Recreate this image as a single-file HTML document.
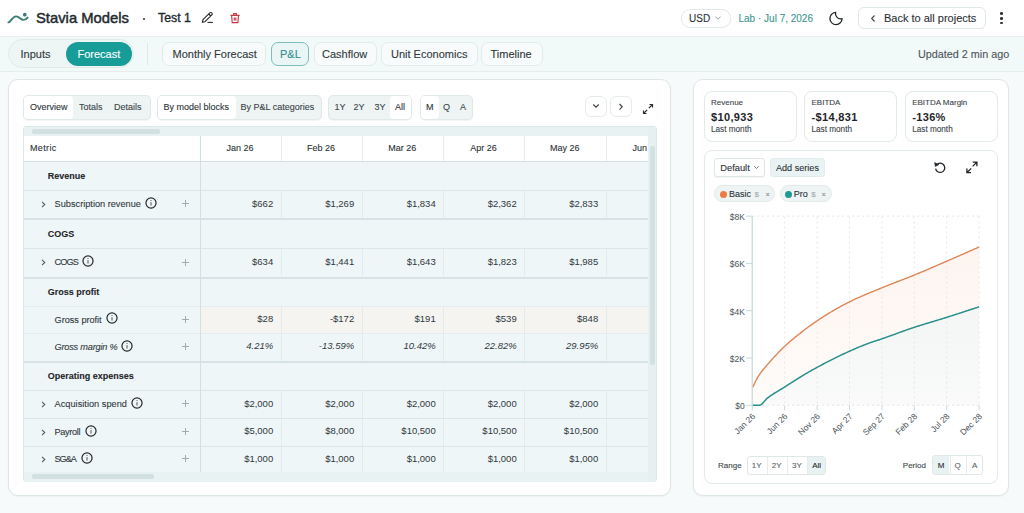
<!DOCTYPE html>
<html><head><meta charset="utf-8">
<style>
*{box-sizing:border-box;margin:0;padding:0}
html,body{width:1024px;height:513px;overflow:hidden}
body{position:relative;background:#f6fafa;font-family:"Liberation Sans",sans-serif;color:#2a3236}
.t{-webkit-text-stroke:0.1px currentColor}
.v{-webkit-text-stroke:0}
.a{position:absolute}
.t{position:absolute;white-space:nowrap;line-height:1}
#hdr{left:0;top:0;width:1024px;height:37px;background:#fff;border-bottom:1px solid #e8efef}
#nav{left:0;top:37px;width:1024px;height:35px;background:#f1f9f9;border-bottom:1px solid #e5eded}
.btn{position:absolute;background:#fff;border:1px solid #dfe7e7;border-radius:6px}
.card{position:absolute;background:#fff;border:1px solid #dfe6e6;border-radius:10px;box-shadow:0 1px 2px rgba(0,0,0,.04)}
.seg{position:absolute;background:#eef4f4;border:1px solid #e0e8e8;border-radius:5px;box-shadow:0 1px 1px rgba(0,0,0,.05)}
.sel{position:absolute;background:#fff;border-radius:4px}
.s9{font-size:9px}
.inf{position:absolute;width:10.6px;height:10.6px;border:1.1px solid #262d31;border-radius:50%}
.inf:before{content:"";position:absolute;left:3.65px;top:1.6px;width:1.2px;height:1.2px;background:#262d31}
.inf:after{content:"";position:absolute;left:3.65px;top:3.8px;width:1.2px;height:3.6px;background:#262d31}
</style></head><body>

<!-- ===== HEADER ===== -->
<div id="hdr" class="a"></div>
<svg class="a" style="left:0;top:0" width="34" height="34" viewBox="0 0 34 34">
  <path d="M8.4 22.4 C10.8 22.4 12.2 16.5 16 16.4 C19.6 16.3 20.4 19.9 23.4 19.9 C25.4 19.9 26.8 18.7 27.6 17.6" fill="none" stroke="#3b7d75" stroke-width="1.9" stroke-linecap="round"/>
  <circle cx="24.8" cy="14.7" r="1.85" fill="#3b7d75"/>
</svg>
<div class="t" style="left:36px;top:11px;font-size:14.8px;-webkit-text-stroke:0.45px #22292d;color:#22292d">Stavia Models</div>
<div class="a" style="left:142.5px;top:17.5px;width:2.6px;height:2.6px;border-radius:50%;background:#333"></div>
<div class="t" style="left:158px;top:12.4px;font-size:12.3px;-webkit-text-stroke:0.35px #22292d;color:#22292d">Test 1</div>
<svg class="a" style="left:0;top:0" width="250" height="34" viewBox="0 0 250 34">
  <path d="M202.4 22.3 L203 19.6 L209.8 12.9 C210.4 12.3 211.2 12.3 211.8 12.9 C212.4 13.5 212.4 14.3 211.8 14.9 L205 21.7 Z M208.7 14 L210.7 16" fill="none" stroke="#25292c" stroke-width="1.15" stroke-linejoin="round"/>
  <path d="M207.5 22.4 H212.8" stroke="#25292c" stroke-width="1.1"/>
  <path d="M230.4 15.3 H239.7 M233.7 15.3 V13.6 H236.4 V15.3 M231.6 15.3 L232.2 22.6 H237.9 L238.5 15.3 M234.3 17.6 V20.5 M235.8 17.6 V20.5" fill="none" stroke="#c23a44" stroke-width="1.15" stroke-linejoin="round"/>
</svg>
<div class="a" style="left:681px;top:9px;width:50px;height:19px;border:1px solid #e1e8e8;border-radius:9px;background:#fff"></div>
<div class="t" style="left:689px;top:13.5px;font-size:10px;color:#2a3236">USD</div>
<svg class="a" style="left:714px;top:15px" width="8" height="6" viewBox="0 0 8 6"><path d="M1.5 1.8 L4 4.2 L6.5 1.8" fill="none" stroke="#8a9599" stroke-width="0.9"/></svg>
<div class="t" style="left:738.5px;top:13.5px;font-size:10px;color:#3d9690">Lab · Jul 7, 2026</div>
<svg class="a" style="left:0;top:0" width="860" height="34" viewBox="0 0 860 34">
  <path d="M835.6 12.4 A6.1 6.1 0 1 0 842.1 18.6 A5.2 5.2 0 0 1 835.6 12.4 Z" fill="none" stroke="#1f2427" stroke-width="1.3" stroke-linejoin="round"/>
</svg>
<div class="btn" style="left:858px;top:7px;width:128px;height:22px;border-radius:6px"></div>
<svg class="a" style="left:869px;top:14px" width="8" height="9" viewBox="0 0 8 9"><path d="M5.5 1.5 L2.7 4.5 L5.5 7.5" fill="none" stroke="#444" stroke-width="1.1"/></svg>
<div class="t" style="left:884px;top:13px;font-size:11px;color:#2a3236">Back to all projects</div>
<div class="a" style="left:1000px;top:12.4px;width:2.6px;height:2.6px;border-radius:50%;background:#333"></div>
<div class="a" style="left:1000px;top:17.1px;width:2.6px;height:2.6px;border-radius:50%;background:#333"></div>
<div class="a" style="left:1000px;top:21.8px;width:2.6px;height:2.6px;border-radius:50%;background:#333"></div>

<!-- ===== NAV ===== -->
<div id="nav" class="a"></div>
<div class="a" style="left:8px;top:39px;width:126px;height:29px;border-radius:15px;background:#eef5f5;border:1px solid #e2eaea"></div>
<div class="t" style="left:20.5px;top:48.5px;font-size:11px;color:#2f383c">Inputs</div>
<div class="a" style="left:66px;top:41.5px;width:65.5px;height:24.5px;border-radius:13px;background:#179c98"></div>
<div class="t" style="left:77.5px;top:48.5px;font-size:11px;color:#fff">Forecast</div>
<div class="a" style="left:146.5px;top:43px;width:1px;height:22px;background:#e0e8e8"></div>
<div class="btn" style="left:162px;top:41.8px;width:104px;height:24.5px;border-radius:7px;border-color:#e3eaea;background:#f7fbfb"></div>
<div class="t" style="left:172.5px;top:48.5px;font-size:11px;color:#2f383c">Monthly Forecast</div>
<div class="btn" style="left:271px;top:41.8px;width:38px;height:24.5px;border-radius:7px;border-color:#7fbcba;background:#eaf5f5"></div>
<div class="t" style="left:280px;top:48.5px;font-size:11px;color:#2f8f8a">P&amp;L</div>
<div class="btn" style="left:314px;top:41.8px;width:63px;height:24.5px;border-radius:7px;border-color:#e3eaea;background:#f7fbfb"></div>
<div class="t" style="left:322px;top:48.5px;font-size:11px;color:#2f383c">Cashflow</div>
<div class="btn" style="left:381px;top:41.8px;width:97px;height:24.5px;border-radius:7px;border-color:#e3eaea;background:#f7fbfb"></div>
<div class="t" style="left:391px;top:48.5px;font-size:11px;color:#2f383c">Unit Economics</div>
<div class="btn" style="left:481px;top:41.8px;width:61.5px;height:24.5px;border-radius:7px;border-color:#e3eaea;background:#f7fbfb"></div>
<div class="t" style="left:490.5px;top:48.5px;font-size:11px;color:#2f383c">Timeline</div>
<div class="t" style="left:918px;top:48.5px;font-size:10.8px;color:#4a5458">Updated 2 min ago</div>

<!-- ===== LEFT CARD ===== -->
<div class="card" style="left:8px;top:79px;width:663px;height:417px"></div>

<!-- toolbar -->
<div class="seg" style="left:22.5px;top:94.5px;width:128px;height:25px"></div>
<div class="sel" style="left:23.5px;top:95.5px;width:49px;height:23px"></div>
<div class="t s9" style="left:30px;top:102.7px;color:#2a3236">Overview</div>
<div class="t s9" style="left:79px;top:102.7px;color:#3a4448">Totals</div>
<div class="t s9" style="left:114px;top:102.7px;color:#3a4448">Details</div>

<div class="seg" style="left:157px;top:94.5px;width:164.5px;height:25px"></div>
<div class="sel" style="left:158px;top:95.5px;width:78px;height:23px"></div>
<div class="t s9" style="left:163.5px;top:102.7px;color:#2a3236">By model blocks</div>
<div class="t s9" style="left:240.5px;top:102.7px;color:#3a4448">By P&amp;L categories</div>

<div class="seg" style="left:327.5px;top:94.5px;width:84px;height:25px"></div>
<div class="sel" style="left:390px;top:95.5px;width:20.5px;height:23px"></div>
<div class="t s9" style="left:334.5px;top:102.7px;color:#3a4448">1Y</div>
<div class="t s9" style="left:353.5px;top:102.7px;color:#3a4448">2Y</div>
<div class="t s9" style="left:374.5px;top:102.7px;color:#3a4448">3Y</div>
<div class="t s9" style="left:395px;top:102.7px;color:#2a3236">All</div>

<div class="seg" style="left:420px;top:94.5px;width:53px;height:25px"></div>
<div class="sel" style="left:421px;top:95.5px;width:18px;height:23px"></div>
<div class="t s9" style="left:426px;top:102.7px;color:#2a3236">M</div>
<div class="t s9" style="left:443px;top:102.7px;color:#3a4448">Q</div>
<div class="t s9" style="left:460px;top:102.7px;color:#3a4448">A</div>

<div class="btn" style="left:585px;top:96px;width:21.5px;height:21px;border-color:#e6ecec"></div>
<svg class="a" style="left:591px;top:102px" width="10" height="8" viewBox="0 0 10 8"><path d="M2.3 2.5 L5 5.2 L7.7 2.5" fill="none" stroke="#444" stroke-width="1.2"/></svg>
<div class="btn" style="left:610px;top:96px;width:21.5px;height:21px;border-color:#e6ecec"></div>
<svg class="a" style="left:617px;top:102px" width="8" height="10" viewBox="0 0 8 10"><path d="M2.5 2 L5.2 4.8 L2.5 7.6" fill="none" stroke="#444" stroke-width="1.2"/></svg>
<svg class="a" style="left:641px;top:102px" width="14" height="14" viewBox="0 0 14 14">
  <path d="M8.5 2.5 H11.5 V5.5 M11.5 2.5 L7.8 6.2 M2.5 8.5 V11.5 H5.5 M2.5 11.5 L6.2 7.8" fill="none" stroke="#2a2f33" stroke-width="1.2"/>
</svg>

<!-- table -->
<div id="tbl" class="a" style="left:22.5px;top:125.5px;width:634px;height:356px;background:#eff6f7;border:1px solid #dde8ea;border-radius:3px"></div>
<div class="a" style="left:23.5px;top:135.5px;width:624.5px;height:25px;background:#fff"></div>
<div class="a" style="left:23.5px;top:160.5px;width:624.5px;height:1.5px;background:#d3e1e3"></div>
<div class="t" style="left:30px;top:135.5px;height:25px;line-height:25px;font-size:9px;letter-spacing:0.35px;color:#2a3236">Metric</div>
<div class="t" style="left:200.0px;width:80px;text-align:center;top:135.5px;height:25px;line-height:25px;font-size:9px;color:#2a3236">Jan 26</div>
<div class="t" style="left:281.0px;width:80px;text-align:center;top:135.5px;height:25px;line-height:25px;font-size:9px;color:#2a3236">Feb 26</div>
<div class="t" style="left:362.25px;width:80px;text-align:center;top:135.5px;height:25px;line-height:25px;font-size:9px;color:#2a3236">Mar 26</div>
<div class="t" style="left:443.5px;width:80px;text-align:center;top:135.5px;height:25px;line-height:25px;font-size:9px;color:#2a3236">Apr 26</div>
<div class="t" style="left:524.75px;width:80px;text-align:center;top:135.5px;height:25px;line-height:25px;font-size:9px;color:#2a3236">May 26</div>
<div class="a" style="left:606.5px;top:135.5px;width:41.5px;height:25px;overflow:hidden"><div class="t" style="left:-0.5px;width:80px;text-align:center;top:0;height:25px;line-height:25px;font-size:9px;color:#2a3236">Jun 26</div></div>
<div class="a" style="left:23.5px;top:190px;width:624.5px;height:1px;background:#dbe6e8"></div>
<div class="t" style="left:47.7px;top:162px;height:28px;line-height:28px;font-size:9px;font-weight:bold;color:#1f262a">Revenue</div>
<div class="a" style="left:23.5px;top:218.3px;width:624.5px;height:2px;background:#d6e2e4"></div>
<div class="t lbl" style="left:54.6px;top:191px;height:27.30000000000001px;line-height:27.30000000000001px;font-size:9.2px;letter-spacing:-0.00px;color:#2f383c">Subscription revenue</div>
<svg class="a" style="left:145px;top:196.85px" width="12" height="12" viewBox="0 0 12 12"><circle cx="6" cy="6" r="5.05" fill="none" stroke="#22292d" stroke-width="1.2"/><path d="M6 5.1 V8.6" stroke="#444" stroke-width="0.9"/><circle cx="6" cy="3.5" r="0.55" fill="#444"/></svg>
<div class="a" style="left:280.5px;top:191px;width:1px;height:27.30000000000001px;background:#e2ebec"></div>
<div class="a" style="left:361.5px;top:191px;width:1px;height:27.30000000000001px;background:#e2ebec"></div>
<div class="a" style="left:443px;top:191px;width:1px;height:27.30000000000001px;background:#e2ebec"></div>
<div class="a" style="left:524px;top:191px;width:1px;height:27.30000000000001px;background:#e2ebec"></div>
<div class="a" style="left:605.5px;top:191px;width:1px;height:27.30000000000001px;background:#e2ebec"></div>
<svg class="a" style="left:40px;top:200.15px" width="8" height="9" viewBox="0 0 8 9"><path d="M2 1.8 L4.8 4.5 L2 7.2" fill="none" stroke="#555e62" stroke-width="1.1"/></svg>
<svg class="a" style="left:180.5px;top:199.35px" width="9" height="9" viewBox="0 0 9 9"><path d="M4.5 1 V8 M1 4.5 H8" fill="none" stroke="#9aa5a8" stroke-width="0.9"/></svg>
<div class="t v" style="left:213.2px;width:60px;text-align:right;top:190.1px;height:27.30000000000001px;line-height:27.30000000000001px;font-size:9.5px;color:#2f383c">$662</div>
<div class="t v" style="left:294.2px;width:60px;text-align:right;top:190.1px;height:27.30000000000001px;line-height:27.30000000000001px;font-size:9.5px;color:#2f383c">$1,269</div>
<div class="t v" style="left:375.7px;width:60px;text-align:right;top:190.1px;height:27.30000000000001px;line-height:27.30000000000001px;font-size:9.5px;color:#2f383c">$1,834</div>
<div class="t v" style="left:456.70000000000005px;width:60px;text-align:right;top:190.1px;height:27.30000000000001px;line-height:27.30000000000001px;font-size:9.5px;color:#2f383c">$2,362</div>
<div class="t v" style="left:538.2px;width:60px;text-align:right;top:190.1px;height:27.30000000000001px;line-height:27.30000000000001px;font-size:9.5px;color:#2f383c">$2,833</div>
<div class="a" style="left:23.5px;top:248.3px;width:624.5px;height:1px;background:#dbe6e8"></div>
<div class="t" style="left:47.7px;top:220.3px;height:28.0px;line-height:28.0px;font-size:9px;font-weight:bold;color:#1f262a">COGS</div>
<div class="a" style="left:23.5px;top:276.5px;width:624.5px;height:2px;background:#d6e2e4"></div>
<div class="t lbl" style="left:54.6px;top:249.3px;height:27.19999999999999px;line-height:27.19999999999999px;font-size:9.2px;letter-spacing:-0.96px;color:#2f383c">COGS</div>
<svg class="a" style="left:82.2px;top:255.09999999999997px" width="12" height="12" viewBox="0 0 12 12"><circle cx="6" cy="6" r="5.05" fill="none" stroke="#22292d" stroke-width="1.2"/><path d="M6 5.1 V8.6" stroke="#444" stroke-width="0.9"/><circle cx="6" cy="3.5" r="0.55" fill="#444"/></svg>
<div class="a" style="left:280.5px;top:249.3px;width:1px;height:27.19999999999999px;background:#e2ebec"></div>
<div class="a" style="left:361.5px;top:249.3px;width:1px;height:27.19999999999999px;background:#e2ebec"></div>
<div class="a" style="left:443px;top:249.3px;width:1px;height:27.19999999999999px;background:#e2ebec"></div>
<div class="a" style="left:524px;top:249.3px;width:1px;height:27.19999999999999px;background:#e2ebec"></div>
<div class="a" style="left:605.5px;top:249.3px;width:1px;height:27.19999999999999px;background:#e2ebec"></div>
<svg class="a" style="left:40px;top:258.4px" width="8" height="9" viewBox="0 0 8 9"><path d="M2 1.8 L4.8 4.5 L2 7.2" fill="none" stroke="#555e62" stroke-width="1.1"/></svg>
<svg class="a" style="left:180.5px;top:257.59999999999997px" width="9" height="9" viewBox="0 0 9 9"><path d="M4.5 1 V8 M1 4.5 H8" fill="none" stroke="#9aa5a8" stroke-width="0.9"/></svg>
<div class="t v" style="left:213.2px;width:60px;text-align:right;top:248.4px;height:27.19999999999999px;line-height:27.19999999999999px;font-size:9.5px;color:#2f383c">$634</div>
<div class="t v" style="left:294.2px;width:60px;text-align:right;top:248.4px;height:27.19999999999999px;line-height:27.19999999999999px;font-size:9.5px;color:#2f383c">$1,441</div>
<div class="t v" style="left:375.7px;width:60px;text-align:right;top:248.4px;height:27.19999999999999px;line-height:27.19999999999999px;font-size:9.5px;color:#2f383c">$1,643</div>
<div class="t v" style="left:456.70000000000005px;width:60px;text-align:right;top:248.4px;height:27.19999999999999px;line-height:27.19999999999999px;font-size:9.5px;color:#2f383c">$1,823</div>
<div class="t v" style="left:538.2px;width:60px;text-align:right;top:248.4px;height:27.19999999999999px;line-height:27.19999999999999px;font-size:9.5px;color:#2f383c">$1,985</div>
<div class="a" style="left:23.5px;top:305.8px;width:624.5px;height:1px;background:#e3ecee"></div>
<div class="t" style="left:47.7px;top:278.5px;height:27.30000000000001px;line-height:27.30000000000001px;font-size:9px;font-weight:bold;color:#1f262a">Gross profit</div>
<div class="a" style="left:201.0px;top:306.8px;width:447.0px;height:26.5px;background:#f5f4f1"></div>
<div class="a" style="left:23.5px;top:333.3px;width:624.5px;height:1px;background:#e3ecee"></div>
<div class="t lbl" style="left:54.6px;top:306.8px;height:26.5px;line-height:26.5px;font-size:9.2px;letter-spacing:-0.04px;color:#2f383c">Gross profit</div>
<svg class="a" style="left:105.9px;top:312.25px" width="12" height="12" viewBox="0 0 12 12"><circle cx="6" cy="6" r="5.05" fill="none" stroke="#22292d" stroke-width="1.2"/><path d="M6 5.1 V8.6" stroke="#444" stroke-width="0.9"/><circle cx="6" cy="3.5" r="0.55" fill="#444"/></svg>
<div class="a" style="left:280.5px;top:306.8px;width:1px;height:26.5px;background:#e2ebec"></div>
<div class="a" style="left:361.5px;top:306.8px;width:1px;height:26.5px;background:#e2ebec"></div>
<div class="a" style="left:443px;top:306.8px;width:1px;height:26.5px;background:#e2ebec"></div>
<div class="a" style="left:524px;top:306.8px;width:1px;height:26.5px;background:#e2ebec"></div>
<div class="a" style="left:605.5px;top:306.8px;width:1px;height:26.5px;background:#e2ebec"></div>
<svg class="a" style="left:180.5px;top:314.75px" width="9" height="9" viewBox="0 0 9 9"><path d="M4.5 1 V8 M1 4.5 H8" fill="none" stroke="#9aa5a8" stroke-width="0.9"/></svg>
<div class="t v" style="left:213.2px;width:60px;text-align:right;top:305.90000000000003px;height:26.5px;line-height:26.5px;font-size:9.5px;color:#2f383c">$28</div>
<div class="t v" style="left:294.2px;width:60px;text-align:right;top:305.90000000000003px;height:26.5px;line-height:26.5px;font-size:9.5px;color:#2f383c">-$172</div>
<div class="t v" style="left:375.7px;width:60px;text-align:right;top:305.90000000000003px;height:26.5px;line-height:26.5px;font-size:9.5px;color:#2f383c">$191</div>
<div class="t v" style="left:456.70000000000005px;width:60px;text-align:right;top:305.90000000000003px;height:26.5px;line-height:26.5px;font-size:9.5px;color:#2f383c">$539</div>
<div class="t v" style="left:538.2px;width:60px;text-align:right;top:305.90000000000003px;height:26.5px;line-height:26.5px;font-size:9.5px;color:#2f383c">$848</div>
<div class="a" style="left:23.5px;top:360.8px;width:624.5px;height:2px;background:#d6e2e4"></div>
<div class="t lbl" style="left:54.6px;top:334.3px;height:26.5px;line-height:26.5px;font-size:9.2px;letter-spacing:-0.22px;font-style:italic;color:#2f383c">Gross margin %</div>
<svg class="a" style="left:121.2px;top:339.75px" width="12" height="12" viewBox="0 0 12 12"><circle cx="6" cy="6" r="5.05" fill="none" stroke="#22292d" stroke-width="1.2"/><path d="M6 5.1 V8.6" stroke="#444" stroke-width="0.9"/><circle cx="6" cy="3.5" r="0.55" fill="#444"/></svg>
<div class="a" style="left:280.5px;top:334.3px;width:1px;height:26.5px;background:#e2ebec"></div>
<div class="a" style="left:361.5px;top:334.3px;width:1px;height:26.5px;background:#e2ebec"></div>
<div class="a" style="left:443px;top:334.3px;width:1px;height:26.5px;background:#e2ebec"></div>
<div class="a" style="left:524px;top:334.3px;width:1px;height:26.5px;background:#e2ebec"></div>
<div class="a" style="left:605.5px;top:334.3px;width:1px;height:26.5px;background:#e2ebec"></div>
<svg class="a" style="left:180.5px;top:342.25px" width="9" height="9" viewBox="0 0 9 9"><path d="M4.5 1 V8 M1 4.5 H8" fill="none" stroke="#9aa5a8" stroke-width="0.9"/></svg>
<div class="t v" style="left:213.2px;width:60px;text-align:right;top:333.40000000000003px;height:26.5px;line-height:26.5px;font-size:9.5px;font-style:italic;color:#2f383c">4.21%</div>
<div class="t v" style="left:294.2px;width:60px;text-align:right;top:333.40000000000003px;height:26.5px;line-height:26.5px;font-size:9.5px;font-style:italic;color:#2f383c">-13.59%</div>
<div class="t v" style="left:375.7px;width:60px;text-align:right;top:333.40000000000003px;height:26.5px;line-height:26.5px;font-size:9.5px;font-style:italic;color:#2f383c">10.42%</div>
<div class="t v" style="left:456.70000000000005px;width:60px;text-align:right;top:333.40000000000003px;height:26.5px;line-height:26.5px;font-size:9.5px;font-style:italic;color:#2f383c">22.82%</div>
<div class="t v" style="left:538.2px;width:60px;text-align:right;top:333.40000000000003px;height:26.5px;line-height:26.5px;font-size:9.5px;font-style:italic;color:#2f383c">29.95%</div>
<div class="a" style="left:23.5px;top:389.6px;width:624.5px;height:1px;background:#dbe6e8"></div>
<div class="t" style="left:47.7px;top:362.8px;height:26.80000000000001px;line-height:26.80000000000001px;font-size:9px;font-weight:bold;color:#1f262a">Operating expenses</div>
<div class="a" style="left:23.5px;top:418.3px;width:624.5px;height:1px;background:#dbe6e8"></div>
<div class="t lbl" style="left:54.6px;top:390.6px;height:27.69999999999999px;line-height:27.69999999999999px;font-size:9.2px;letter-spacing:0.02px;color:#2f383c">Acquisition spend</div>
<svg class="a" style="left:131.1px;top:396.65000000000003px" width="12" height="12" viewBox="0 0 12 12"><circle cx="6" cy="6" r="5.05" fill="none" stroke="#22292d" stroke-width="1.2"/><path d="M6 5.1 V8.6" stroke="#444" stroke-width="0.9"/><circle cx="6" cy="3.5" r="0.55" fill="#444"/></svg>
<div class="a" style="left:280.5px;top:390.6px;width:1px;height:27.69999999999999px;background:#e2ebec"></div>
<div class="a" style="left:361.5px;top:390.6px;width:1px;height:27.69999999999999px;background:#e2ebec"></div>
<div class="a" style="left:443px;top:390.6px;width:1px;height:27.69999999999999px;background:#e2ebec"></div>
<div class="a" style="left:524px;top:390.6px;width:1px;height:27.69999999999999px;background:#e2ebec"></div>
<div class="a" style="left:605.5px;top:390.6px;width:1px;height:27.69999999999999px;background:#e2ebec"></div>
<svg class="a" style="left:40px;top:399.95000000000005px" width="8" height="9" viewBox="0 0 8 9"><path d="M2 1.8 L4.8 4.5 L2 7.2" fill="none" stroke="#555e62" stroke-width="1.1"/></svg>
<svg class="a" style="left:180.5px;top:399.15000000000003px" width="9" height="9" viewBox="0 0 9 9"><path d="M4.5 1 V8 M1 4.5 H8" fill="none" stroke="#9aa5a8" stroke-width="0.9"/></svg>
<div class="t v" style="left:213.2px;width:60px;text-align:right;top:389.70000000000005px;height:27.69999999999999px;line-height:27.69999999999999px;font-size:9.5px;color:#2f383c">$2,000</div>
<div class="t v" style="left:294.2px;width:60px;text-align:right;top:389.70000000000005px;height:27.69999999999999px;line-height:27.69999999999999px;font-size:9.5px;color:#2f383c">$2,000</div>
<div class="t v" style="left:375.7px;width:60px;text-align:right;top:389.70000000000005px;height:27.69999999999999px;line-height:27.69999999999999px;font-size:9.5px;color:#2f383c">$2,000</div>
<div class="t v" style="left:456.70000000000005px;width:60px;text-align:right;top:389.70000000000005px;height:27.69999999999999px;line-height:27.69999999999999px;font-size:9.5px;color:#2f383c">$2,000</div>
<div class="t v" style="left:538.2px;width:60px;text-align:right;top:389.70000000000005px;height:27.69999999999999px;line-height:27.69999999999999px;font-size:9.5px;color:#2f383c">$2,000</div>
<div class="a" style="left:23.5px;top:446px;width:624.5px;height:1px;background:#dbe6e8"></div>
<div class="t lbl" style="left:54.6px;top:419.3px;height:26.69999999999999px;line-height:26.69999999999999px;font-size:9.2px;letter-spacing:-0.37px;color:#2f383c">Payroll</div>
<svg class="a" style="left:85.3px;top:424.84999999999997px" width="12" height="12" viewBox="0 0 12 12"><circle cx="6" cy="6" r="5.05" fill="none" stroke="#22292d" stroke-width="1.2"/><path d="M6 5.1 V8.6" stroke="#444" stroke-width="0.9"/><circle cx="6" cy="3.5" r="0.55" fill="#444"/></svg>
<div class="a" style="left:280.5px;top:419.3px;width:1px;height:26.69999999999999px;background:#e2ebec"></div>
<div class="a" style="left:361.5px;top:419.3px;width:1px;height:26.69999999999999px;background:#e2ebec"></div>
<div class="a" style="left:443px;top:419.3px;width:1px;height:26.69999999999999px;background:#e2ebec"></div>
<div class="a" style="left:524px;top:419.3px;width:1px;height:26.69999999999999px;background:#e2ebec"></div>
<div class="a" style="left:605.5px;top:419.3px;width:1px;height:26.69999999999999px;background:#e2ebec"></div>
<svg class="a" style="left:40px;top:428.15px" width="8" height="9" viewBox="0 0 8 9"><path d="M2 1.8 L4.8 4.5 L2 7.2" fill="none" stroke="#555e62" stroke-width="1.1"/></svg>
<svg class="a" style="left:180.5px;top:427.34999999999997px" width="9" height="9" viewBox="0 0 9 9"><path d="M4.5 1 V8 M1 4.5 H8" fill="none" stroke="#9aa5a8" stroke-width="0.9"/></svg>
<div class="t v" style="left:213.2px;width:60px;text-align:right;top:418.40000000000003px;height:26.69999999999999px;line-height:26.69999999999999px;font-size:9.5px;color:#2f383c">$5,000</div>
<div class="t v" style="left:294.2px;width:60px;text-align:right;top:418.40000000000003px;height:26.69999999999999px;line-height:26.69999999999999px;font-size:9.5px;color:#2f383c">$8,000</div>
<div class="t v" style="left:375.7px;width:60px;text-align:right;top:418.40000000000003px;height:26.69999999999999px;line-height:26.69999999999999px;font-size:9.5px;color:#2f383c">$10,500</div>
<div class="t v" style="left:456.70000000000005px;width:60px;text-align:right;top:418.40000000000003px;height:26.69999999999999px;line-height:26.69999999999999px;font-size:9.5px;color:#2f383c">$10,500</div>
<div class="t v" style="left:538.2px;width:60px;text-align:right;top:418.40000000000003px;height:26.69999999999999px;line-height:26.69999999999999px;font-size:9.5px;color:#2f383c">$10,500</div>
<div class="t lbl" style="left:54.6px;top:447px;height:25px;line-height:25px;font-size:9.2px;letter-spacing:-1.12px;color:#2f383c">SG&amp;A</div>
<svg class="a" style="left:81.3px;top:451.7px" width="12" height="12" viewBox="0 0 12 12"><circle cx="6" cy="6" r="5.05" fill="none" stroke="#22292d" stroke-width="1.2"/><path d="M6 5.1 V8.6" stroke="#444" stroke-width="0.9"/><circle cx="6" cy="3.5" r="0.55" fill="#444"/></svg>
<div class="a" style="left:280.5px;top:447px;width:1px;height:25px;background:#e2ebec"></div>
<div class="a" style="left:361.5px;top:447px;width:1px;height:25px;background:#e2ebec"></div>
<div class="a" style="left:443px;top:447px;width:1px;height:25px;background:#e2ebec"></div>
<div class="a" style="left:524px;top:447px;width:1px;height:25px;background:#e2ebec"></div>
<div class="a" style="left:605.5px;top:447px;width:1px;height:25px;background:#e2ebec"></div>
<svg class="a" style="left:40px;top:455.0px" width="8" height="9" viewBox="0 0 8 9"><path d="M2 1.8 L4.8 4.5 L2 7.2" fill="none" stroke="#555e62" stroke-width="1.1"/></svg>
<svg class="a" style="left:180.5px;top:454.2px" width="9" height="9" viewBox="0 0 9 9"><path d="M4.5 1 V8 M1 4.5 H8" fill="none" stroke="#9aa5a8" stroke-width="0.9"/></svg>
<div class="t v" style="left:213.2px;width:60px;text-align:right;top:446.1px;height:25px;line-height:25px;font-size:9.5px;color:#2f383c">$1,000</div>
<div class="t v" style="left:294.2px;width:60px;text-align:right;top:446.1px;height:25px;line-height:25px;font-size:9.5px;color:#2f383c">$1,000</div>
<div class="t v" style="left:375.7px;width:60px;text-align:right;top:446.1px;height:25px;line-height:25px;font-size:9.5px;color:#2f383c">$1,000</div>
<div class="t v" style="left:456.70000000000005px;width:60px;text-align:right;top:446.1px;height:25px;line-height:25px;font-size:9.5px;color:#2f383c">$1,000</div>
<div class="t v" style="left:538.2px;width:60px;text-align:right;top:446.1px;height:25px;line-height:25px;font-size:9.5px;color:#2f383c">$1,000</div>
<div class="a" style="left:199.5px;top:135.5px;width:1.5px;height:336.5px;background:#d3e0e2"></div>
<div class="a" style="left:280.5px;top:135.5px;width:1px;height:25px;background:#e3ecee"></div>
<div class="a" style="left:361.5px;top:135.5px;width:1px;height:25px;background:#e3ecee"></div>
<div class="a" style="left:443px;top:135.5px;width:1px;height:25px;background:#e3ecee"></div>
<div class="a" style="left:524px;top:135.5px;width:1px;height:25px;background:#e3ecee"></div>
<div class="a" style="left:605.5px;top:135.5px;width:1px;height:25px;background:#e3ecee"></div>
<div class="a" style="left:23.5px;top:126.5px;width:624.5px;height:9px;background:#e9f2f3"></div>
<div class="a" style="left:32px;top:129.3px;width:128px;height:4.3px;border-radius:2px;background:#d2e0e2"></div>
<div class="a" style="left:23.5px;top:472px;width:624.5px;height:9.5px;background:#e9f2f3"></div>
<div class="a" style="left:32px;top:474.3px;width:122px;height:4.3px;border-radius:2px;background:#d2e0e2"></div>
<div class="a" style="left:648px;top:126.5px;width:8px;height:355px;background:#e6f0f1"></div>
<div class="a" style="left:649.5px;top:146px;width:5px;height:219px;border-radius:2px;background:#d3e1e3"></div>

<!-- ===== RIGHT CARD ===== -->
<div class="card" style="left:692.5px;top:79px;width:316px;height:416.5px"></div>
<div class="a" style="left:703.5px;top:90.5px;width:93px;height:51px;background:#fff;border:1px solid #e2e9e9;border-radius:8px"></div>
<div class="t" style="left:711.0px;top:99px;font-size:8px;color:#3a4448">Revenue</div>
<div class="t" style="left:711.0px;top:111.9px;font-size:11px;letter-spacing:0.35px;font-weight:bold;-webkit-text-stroke:0;color:#1f262a">$10,933</div>
<div class="t" style="left:711.0px;top:126.2px;font-size:8.2px;color:#3a4448">Last month</div>
<div class="a" style="left:804px;top:90.5px;width:93px;height:51px;background:#fff;border:1px solid #e2e9e9;border-radius:8px"></div>
<div class="t" style="left:811.5px;top:99px;font-size:8px;color:#3a4448">EBITDA</div>
<div class="t" style="left:811.5px;top:111.9px;font-size:11px;letter-spacing:0.35px;font-weight:bold;-webkit-text-stroke:0;color:#1f262a">-$14,831</div>
<div class="t" style="left:811.5px;top:126.2px;font-size:8.2px;color:#3a4448">Last month</div>
<div class="a" style="left:904.7px;top:90.5px;width:93px;height:51px;background:#fff;border:1px solid #e2e9e9;border-radius:8px"></div>
<div class="t" style="left:912.2px;top:99px;font-size:8px;color:#3a4448">EBITDA Margin</div>
<div class="t" style="left:912.2px;top:111.9px;font-size:11px;letter-spacing:0.35px;font-weight:bold;-webkit-text-stroke:0;color:#1f262a">-136%</div>
<div class="t" style="left:912.2px;top:126.2px;font-size:8.2px;color:#3a4448">Last month</div>
<div class="a" style="left:704px;top:149.7px;width:294px;height:334px;background:#fff;border:1px solid #e2e9e9;border-radius:8px"></div>
<div class="a" style="left:714.4px;top:158.3px;width:51px;height:19.2px;background:#fff;border:1px solid #e0e7e7;border-radius:3px;box-shadow:0 1px 1px rgba(0,0,0,.05)"></div>
<div class="t" style="left:720.3px;top:164px;font-size:9.3px;color:#2a3236">Default</div>
<svg class="a" style="left:753px;top:165px" width="7" height="5" viewBox="0 0 7 5"><path d="M1.3 1.3 L3.5 3.5 L5.7 1.3" fill="none" stroke="#666" stroke-width="0.9"/></svg>
<div class="a" style="left:769.5px;top:158.3px;width:55.5px;height:19.2px;background:#eaf3f3;border:1px solid #e3eded;border-radius:3px"></div>
<div class="t" style="left:776px;top:164px;font-size:9.1px;color:#2a3236">Add series</div>
<div class="a" style="left:714.4px;top:184.8px;width:60.6px;height:17.2px;background:#eef4f4;border:1px solid #e3eaea;border-radius:9px"></div>
<div class="a" style="left:719.9px;top:190.7px;width:7px;height:7px;border-radius:50%;background:#ea7b45"></div>
<div class="t" style="left:729px;top:190.2px;font-size:9px;color:#2a3236">Basic</div>
<div class="t" style="left:754.5px;top:190.6px;font-size:8px;color:#a3acae">$</div>
<div class="t" style="left:765.5px;top:190.8px;font-size:7.5px;color:#8a8f91">×</div>
<div class="a" style="left:779.7px;top:184.8px;width:52px;height:17.2px;background:#eef4f4;border:1px solid #e3eaea;border-radius:9px"></div>
<div class="a" style="left:784.8px;top:190.7px;width:7px;height:7px;border-radius:50%;background:#1e9a96"></div>
<div class="t" style="left:793.7px;top:190.2px;font-size:9px;color:#2a3236">Pro</div>
<div class="t" style="left:811.3px;top:190.6px;font-size:8px;color:#a3acae">$</div>
<div class="t" style="left:821.5px;top:190.8px;font-size:7.5px;color:#8a8f91">×</div>
<svg class="a" style="left:0;top:0" width="1024" height="513" viewBox="0 0 1024 513">
<defs><linearGradient id="go" gradientUnits="userSpaceOnUse" x1="0" y1="247" x2="0" y2="405"><stop offset="0" stop-color="#fdf4ef"/><stop offset="1" stop-color="#fffcfa"/></linearGradient><linearGradient id="gt" gradientUnits="userSpaceOnUse" x1="0" y1="306" x2="0" y2="405"><stop offset="0" stop-color="#f3f6f5"/><stop offset="1" stop-color="#f9faf9"/></linearGradient></defs>
<path d="M752.6 387.50 L753.6 385.34 L754.6 383.25 L755.6 381.25 L756.6 379.34 L757.6 377.54 L758.6 375.85 L759.6 374.30 L760.6 372.86 L761.6 371.51 L762.6 370.23 L763.6 369.01 L764.6 367.83 L765.6 366.68 L766.6 365.53 L767.6 364.38 L768.6 363.23 L769.6 362.09 L770.6 360.96 L771.6 359.84 L772.6 358.73 L773.6 357.63 L774.6 356.54 L775.6 355.47 L776.6 354.41 L777.6 353.36 L778.6 352.32 L779.6 351.30 L780.6 350.29 L781.6 349.29 L782.6 348.32 L783.6 347.35 L784.6 346.41 L785.6 345.48 L786.6 344.56 L787.6 343.66 L788.6 342.77 L789.6 341.90 L790.6 341.04 L791.6 340.19 L792.6 339.35 L793.6 338.52 L794.6 337.70 L795.6 336.88 L796.6 336.07 L797.6 335.27 L798.6 334.48 L799.6 333.68 L800.6 332.89 L801.6 332.11 L802.6 331.33 L803.6 330.55 L804.6 329.78 L805.6 329.02 L806.6 328.26 L807.6 327.51 L808.6 326.77 L809.6 326.03 L810.6 325.31 L811.6 324.59 L812.6 323.88 L813.6 323.17 L814.6 322.48 L815.6 321.80 L816.6 321.13 L817.6 320.47 L818.6 319.81 L819.6 319.16 L820.6 318.51 L821.6 317.86 L822.6 317.22 L823.6 316.59 L824.6 315.95 L825.6 315.32 L826.6 314.70 L827.6 314.08 L828.6 313.46 L829.6 312.85 L830.6 312.25 L831.6 311.64 L832.6 311.05 L833.6 310.46 L834.6 309.87 L835.6 309.29 L836.6 308.71 L837.6 308.14 L838.6 307.58 L839.6 307.02 L840.6 306.47 L841.6 305.92 L842.6 305.38 L843.6 304.84 L844.6 304.31 L845.6 303.79 L846.6 303.27 L847.6 302.76 L848.6 302.25 L849.6 301.75 L850.6 301.26 L851.6 300.77 L852.6 300.29 L853.6 299.82 L854.6 299.35 L855.6 298.89 L856.6 298.43 L857.6 297.98 L858.6 297.53 L859.6 297.09 L860.6 296.65 L861.6 296.21 L862.6 295.78 L863.6 295.35 L864.6 294.92 L865.6 294.50 L866.6 294.08 L867.6 293.66 L868.6 293.25 L869.6 292.83 L870.6 292.42 L871.6 292.01 L872.6 291.60 L873.6 291.19 L874.6 290.78 L875.6 290.38 L876.6 289.97 L877.6 289.56 L878.6 289.15 L879.6 288.74 L880.6 288.33 L881.6 287.92 L882.6 287.51 L883.6 287.10 L884.6 286.70 L885.6 286.30 L886.6 285.90 L887.6 285.50 L888.6 285.11 L889.6 284.71 L890.6 284.32 L891.6 283.93 L892.6 283.55 L893.6 283.16 L894.6 282.77 L895.6 282.39 L896.6 282.00 L897.6 281.62 L898.6 281.23 L899.6 280.85 L900.6 280.46 L901.6 280.08 L902.6 279.69 L903.6 279.31 L904.6 278.92 L905.6 278.53 L906.6 278.14 L907.6 277.75 L908.6 277.35 L909.6 276.95 L910.6 276.55 L911.6 276.15 L912.6 275.75 L913.6 275.34 L914.6 274.93 L915.6 274.52 L916.6 274.11 L917.6 273.69 L918.6 273.27 L919.6 272.86 L920.6 272.44 L921.6 272.02 L922.6 271.60 L923.6 271.17 L924.6 270.75 L925.6 270.32 L926.6 269.90 L927.6 269.47 L928.6 269.04 L929.6 268.61 L930.6 268.18 L931.6 267.75 L932.6 267.32 L933.6 266.89 L934.6 266.46 L935.6 266.03 L936.6 265.59 L937.6 265.16 L938.6 264.73 L939.6 264.29 L940.6 263.86 L941.6 263.43 L942.6 262.99 L943.6 262.56 L944.6 262.12 L945.6 261.69 L946.6 261.26 L947.6 260.82 L948.6 260.39 L949.6 259.95 L950.6 259.52 L951.6 259.08 L952.6 258.65 L953.6 258.21 L954.6 257.78 L955.6 257.34 L956.6 256.90 L957.6 256.46 L958.6 256.03 L959.6 255.59 L960.6 255.15 L961.6 254.71 L962.6 254.27 L963.6 253.83 L964.6 253.39 L965.6 252.95 L966.6 252.51 L967.6 252.06 L968.6 251.62 L969.6 251.18 L970.6 250.74 L971.6 250.29 L972.6 249.85 L973.6 249.41 L974.6 248.96 L975.6 248.52 L976.6 248.07 L977.6 247.62 L978.6 247.18 L979.0 247.00 L979 405.3 L752.4 405.3 Z" fill="url(#go)"/>
<path d="M752.4 405.20 L753.4 405.20 L754.4 405.20 L755.4 405.20 L756.4 405.20 L757.4 405.20 L758.4 405.20 L759.4 405.20 L760.4 405.05 L761.4 404.49 L762.4 403.62 L763.4 402.53 L764.4 401.34 L765.4 400.13 L766.4 399.01 L767.4 398.08 L768.4 397.32 L769.4 396.59 L770.4 395.88 L771.4 395.20 L772.4 394.53 L773.4 393.89 L774.4 393.25 L775.4 392.63 L776.4 392.02 L777.4 391.41 L778.4 390.81 L779.4 390.21 L780.4 389.61 L781.4 389.01 L782.4 388.40 L783.4 387.78 L784.4 387.15 L785.4 386.51 L786.4 385.88 L787.4 385.24 L788.4 384.60 L789.4 383.96 L790.4 383.33 L791.4 382.69 L792.4 382.05 L793.4 381.41 L794.4 380.77 L795.4 380.14 L796.4 379.51 L797.4 378.88 L798.4 378.25 L799.4 377.62 L800.4 377.00 L801.4 376.39 L802.4 375.77 L803.4 375.17 L804.4 374.56 L805.4 373.97 L806.4 373.37 L807.4 372.79 L808.4 372.21 L809.4 371.64 L810.4 371.07 L811.4 370.51 L812.4 369.96 L813.4 369.40 L814.4 368.85 L815.4 368.29 L816.4 367.75 L817.4 367.20 L818.4 366.66 L819.4 366.12 L820.4 365.58 L821.4 365.04 L822.4 364.51 L823.4 363.98 L824.4 363.45 L825.4 362.93 L826.4 362.41 L827.4 361.89 L828.4 361.37 L829.4 360.86 L830.4 360.35 L831.4 359.84 L832.4 359.34 L833.4 358.83 L834.4 358.34 L835.4 357.84 L836.4 357.35 L837.4 356.86 L838.4 356.37 L839.4 355.89 L840.4 355.41 L841.4 354.93 L842.4 354.46 L843.4 353.99 L844.4 353.52 L845.4 353.06 L846.4 352.60 L847.4 352.14 L848.4 351.69 L849.4 351.24 L850.4 350.79 L851.4 350.35 L852.4 349.91 L853.4 349.47 L854.4 349.04 L855.4 348.61 L856.4 348.18 L857.4 347.76 L858.4 347.34 L859.4 346.93 L860.4 346.52 L861.4 346.11 L862.4 345.71 L863.4 345.31 L864.4 344.92 L865.4 344.53 L866.4 344.14 L867.4 343.76 L868.4 343.39 L869.4 343.02 L870.4 342.66 L871.4 342.30 L872.4 341.96 L873.4 341.62 L874.4 341.29 L875.4 340.97 L876.4 340.64 L877.4 340.32 L878.4 340.00 L879.4 339.67 L880.4 339.34 L881.4 339.00 L882.4 338.66 L883.4 338.31 L884.4 337.96 L885.4 337.61 L886.4 337.25 L887.4 336.89 L888.4 336.54 L889.4 336.17 L890.4 335.81 L891.4 335.45 L892.4 335.08 L893.4 334.72 L894.4 334.35 L895.4 333.99 L896.4 333.62 L897.4 333.26 L898.4 332.89 L899.4 332.52 L900.4 332.16 L901.4 331.80 L902.4 331.44 L903.4 331.07 L904.4 330.72 L905.4 330.36 L906.4 330.00 L907.4 329.65 L908.4 329.30 L909.4 328.95 L910.4 328.61 L911.4 328.27 L912.4 327.93 L913.4 327.60 L914.4 327.27 L915.4 326.94 L916.4 326.62 L917.4 326.30 L918.4 325.98 L919.4 325.67 L920.4 325.35 L921.4 325.04 L922.4 324.73 L923.4 324.42 L924.4 324.12 L925.4 323.81 L926.4 323.51 L927.4 323.21 L928.4 322.91 L929.4 322.60 L930.4 322.30 L931.4 322.00 L932.4 321.71 L933.4 321.41 L934.4 321.11 L935.4 320.81 L936.4 320.50 L937.4 320.20 L938.4 319.90 L939.4 319.60 L940.4 319.29 L941.4 318.99 L942.4 318.68 L943.4 318.37 L944.4 318.06 L945.4 317.75 L946.4 317.43 L947.4 317.11 L948.4 316.80 L949.4 316.48 L950.4 316.16 L951.4 315.84 L952.4 315.52 L953.4 315.20 L954.4 314.88 L955.4 314.56 L956.4 314.23 L957.4 313.91 L958.4 313.59 L959.4 313.26 L960.4 312.94 L961.4 312.61 L962.4 312.29 L963.4 311.96 L964.4 311.64 L965.4 311.31 L966.4 310.98 L967.4 310.65 L968.4 310.32 L969.4 309.99 L970.4 309.66 L971.4 309.33 L972.4 309.00 L973.4 308.67 L974.4 308.34 L975.4 308.00 L976.4 307.67 L977.4 307.34 L978.4 307.00 L979.0 306.80 L979 405.3 L752.4 405.3 Z" fill="url(#gt)"/>
<line x1="784.6999999999999" y1="216.5" x2="784.6999999999999" y2="405.3" stroke="#e4e8e8" stroke-width="1" stroke-dasharray="2 3"/>
<line x1="817.0999999999999" y1="216.5" x2="817.0999999999999" y2="405.3" stroke="#e4e8e8" stroke-width="1" stroke-dasharray="2 3"/>
<line x1="849.5" y1="216.5" x2="849.5" y2="405.3" stroke="#e4e8e8" stroke-width="1" stroke-dasharray="2 3"/>
<line x1="881.9" y1="216.5" x2="881.9" y2="405.3" stroke="#e4e8e8" stroke-width="1" stroke-dasharray="2 3"/>
<line x1="914.3" y1="216.5" x2="914.3" y2="405.3" stroke="#e4e8e8" stroke-width="1" stroke-dasharray="2 3"/>
<line x1="946.6999999999999" y1="216.5" x2="946.6999999999999" y2="405.3" stroke="#e4e8e8" stroke-width="1" stroke-dasharray="2 3"/>
<line x1="979.0999999999999" y1="216.5" x2="979.0999999999999" y2="405.3" stroke="#e4e8e8" stroke-width="1" stroke-dasharray="2 3"/>
<line x1="752.2" y1="405.3" x2="980" y2="405.3" stroke="#e3e6e6" stroke-width="1" stroke-dasharray="2 3"/>
<line x1="752.2" y1="216.10000000000002" x2="980" y2="216.10000000000002" stroke="#e3e6e6" stroke-width="1" stroke-dasharray="2 3"/>
<path d="M752.6 387.50 L753.6 385.34 L754.6 383.25 L755.6 381.25 L756.6 379.34 L757.6 377.54 L758.6 375.85 L759.6 374.30 L760.6 372.86 L761.6 371.51 L762.6 370.23 L763.6 369.01 L764.6 367.83 L765.6 366.68 L766.6 365.53 L767.6 364.38 L768.6 363.23 L769.6 362.09 L770.6 360.96 L771.6 359.84 L772.6 358.73 L773.6 357.63 L774.6 356.54 L775.6 355.47 L776.6 354.41 L777.6 353.36 L778.6 352.32 L779.6 351.30 L780.6 350.29 L781.6 349.29 L782.6 348.32 L783.6 347.35 L784.6 346.41 L785.6 345.48 L786.6 344.56 L787.6 343.66 L788.6 342.77 L789.6 341.90 L790.6 341.04 L791.6 340.19 L792.6 339.35 L793.6 338.52 L794.6 337.70 L795.6 336.88 L796.6 336.07 L797.6 335.27 L798.6 334.48 L799.6 333.68 L800.6 332.89 L801.6 332.11 L802.6 331.33 L803.6 330.55 L804.6 329.78 L805.6 329.02 L806.6 328.26 L807.6 327.51 L808.6 326.77 L809.6 326.03 L810.6 325.31 L811.6 324.59 L812.6 323.88 L813.6 323.17 L814.6 322.48 L815.6 321.80 L816.6 321.13 L817.6 320.47 L818.6 319.81 L819.6 319.16 L820.6 318.51 L821.6 317.86 L822.6 317.22 L823.6 316.59 L824.6 315.95 L825.6 315.32 L826.6 314.70 L827.6 314.08 L828.6 313.46 L829.6 312.85 L830.6 312.25 L831.6 311.64 L832.6 311.05 L833.6 310.46 L834.6 309.87 L835.6 309.29 L836.6 308.71 L837.6 308.14 L838.6 307.58 L839.6 307.02 L840.6 306.47 L841.6 305.92 L842.6 305.38 L843.6 304.84 L844.6 304.31 L845.6 303.79 L846.6 303.27 L847.6 302.76 L848.6 302.25 L849.6 301.75 L850.6 301.26 L851.6 300.77 L852.6 300.29 L853.6 299.82 L854.6 299.35 L855.6 298.89 L856.6 298.43 L857.6 297.98 L858.6 297.53 L859.6 297.09 L860.6 296.65 L861.6 296.21 L862.6 295.78 L863.6 295.35 L864.6 294.92 L865.6 294.50 L866.6 294.08 L867.6 293.66 L868.6 293.25 L869.6 292.83 L870.6 292.42 L871.6 292.01 L872.6 291.60 L873.6 291.19 L874.6 290.78 L875.6 290.38 L876.6 289.97 L877.6 289.56 L878.6 289.15 L879.6 288.74 L880.6 288.33 L881.6 287.92 L882.6 287.51 L883.6 287.10 L884.6 286.70 L885.6 286.30 L886.6 285.90 L887.6 285.50 L888.6 285.11 L889.6 284.71 L890.6 284.32 L891.6 283.93 L892.6 283.55 L893.6 283.16 L894.6 282.77 L895.6 282.39 L896.6 282.00 L897.6 281.62 L898.6 281.23 L899.6 280.85 L900.6 280.46 L901.6 280.08 L902.6 279.69 L903.6 279.31 L904.6 278.92 L905.6 278.53 L906.6 278.14 L907.6 277.75 L908.6 277.35 L909.6 276.95 L910.6 276.55 L911.6 276.15 L912.6 275.75 L913.6 275.34 L914.6 274.93 L915.6 274.52 L916.6 274.11 L917.6 273.69 L918.6 273.27 L919.6 272.86 L920.6 272.44 L921.6 272.02 L922.6 271.60 L923.6 271.17 L924.6 270.75 L925.6 270.32 L926.6 269.90 L927.6 269.47 L928.6 269.04 L929.6 268.61 L930.6 268.18 L931.6 267.75 L932.6 267.32 L933.6 266.89 L934.6 266.46 L935.6 266.03 L936.6 265.59 L937.6 265.16 L938.6 264.73 L939.6 264.29 L940.6 263.86 L941.6 263.43 L942.6 262.99 L943.6 262.56 L944.6 262.12 L945.6 261.69 L946.6 261.26 L947.6 260.82 L948.6 260.39 L949.6 259.95 L950.6 259.52 L951.6 259.08 L952.6 258.65 L953.6 258.21 L954.6 257.78 L955.6 257.34 L956.6 256.90 L957.6 256.46 L958.6 256.03 L959.6 255.59 L960.6 255.15 L961.6 254.71 L962.6 254.27 L963.6 253.83 L964.6 253.39 L965.6 252.95 L966.6 252.51 L967.6 252.06 L968.6 251.62 L969.6 251.18 L970.6 250.74 L971.6 250.29 L972.6 249.85 L973.6 249.41 L974.6 248.96 L975.6 248.52 L976.6 248.07 L977.6 247.62 L978.6 247.18 L979.0 247.00" fill="none" stroke="#e08656" stroke-width="1.4"/>
<path d="M752.4 405.20 L753.4 405.20 L754.4 405.20 L755.4 405.20 L756.4 405.20 L757.4 405.20 L758.4 405.20 L759.4 405.20 L760.4 405.05 L761.4 404.49 L762.4 403.62 L763.4 402.53 L764.4 401.34 L765.4 400.13 L766.4 399.01 L767.4 398.08 L768.4 397.32 L769.4 396.59 L770.4 395.88 L771.4 395.20 L772.4 394.53 L773.4 393.89 L774.4 393.25 L775.4 392.63 L776.4 392.02 L777.4 391.41 L778.4 390.81 L779.4 390.21 L780.4 389.61 L781.4 389.01 L782.4 388.40 L783.4 387.78 L784.4 387.15 L785.4 386.51 L786.4 385.88 L787.4 385.24 L788.4 384.60 L789.4 383.96 L790.4 383.33 L791.4 382.69 L792.4 382.05 L793.4 381.41 L794.4 380.77 L795.4 380.14 L796.4 379.51 L797.4 378.88 L798.4 378.25 L799.4 377.62 L800.4 377.00 L801.4 376.39 L802.4 375.77 L803.4 375.17 L804.4 374.56 L805.4 373.97 L806.4 373.37 L807.4 372.79 L808.4 372.21 L809.4 371.64 L810.4 371.07 L811.4 370.51 L812.4 369.96 L813.4 369.40 L814.4 368.85 L815.4 368.29 L816.4 367.75 L817.4 367.20 L818.4 366.66 L819.4 366.12 L820.4 365.58 L821.4 365.04 L822.4 364.51 L823.4 363.98 L824.4 363.45 L825.4 362.93 L826.4 362.41 L827.4 361.89 L828.4 361.37 L829.4 360.86 L830.4 360.35 L831.4 359.84 L832.4 359.34 L833.4 358.83 L834.4 358.34 L835.4 357.84 L836.4 357.35 L837.4 356.86 L838.4 356.37 L839.4 355.89 L840.4 355.41 L841.4 354.93 L842.4 354.46 L843.4 353.99 L844.4 353.52 L845.4 353.06 L846.4 352.60 L847.4 352.14 L848.4 351.69 L849.4 351.24 L850.4 350.79 L851.4 350.35 L852.4 349.91 L853.4 349.47 L854.4 349.04 L855.4 348.61 L856.4 348.18 L857.4 347.76 L858.4 347.34 L859.4 346.93 L860.4 346.52 L861.4 346.11 L862.4 345.71 L863.4 345.31 L864.4 344.92 L865.4 344.53 L866.4 344.14 L867.4 343.76 L868.4 343.39 L869.4 343.02 L870.4 342.66 L871.4 342.30 L872.4 341.96 L873.4 341.62 L874.4 341.29 L875.4 340.97 L876.4 340.64 L877.4 340.32 L878.4 340.00 L879.4 339.67 L880.4 339.34 L881.4 339.00 L882.4 338.66 L883.4 338.31 L884.4 337.96 L885.4 337.61 L886.4 337.25 L887.4 336.89 L888.4 336.54 L889.4 336.17 L890.4 335.81 L891.4 335.45 L892.4 335.08 L893.4 334.72 L894.4 334.35 L895.4 333.99 L896.4 333.62 L897.4 333.26 L898.4 332.89 L899.4 332.52 L900.4 332.16 L901.4 331.80 L902.4 331.44 L903.4 331.07 L904.4 330.72 L905.4 330.36 L906.4 330.00 L907.4 329.65 L908.4 329.30 L909.4 328.95 L910.4 328.61 L911.4 328.27 L912.4 327.93 L913.4 327.60 L914.4 327.27 L915.4 326.94 L916.4 326.62 L917.4 326.30 L918.4 325.98 L919.4 325.67 L920.4 325.35 L921.4 325.04 L922.4 324.73 L923.4 324.42 L924.4 324.12 L925.4 323.81 L926.4 323.51 L927.4 323.21 L928.4 322.91 L929.4 322.60 L930.4 322.30 L931.4 322.00 L932.4 321.71 L933.4 321.41 L934.4 321.11 L935.4 320.81 L936.4 320.50 L937.4 320.20 L938.4 319.90 L939.4 319.60 L940.4 319.29 L941.4 318.99 L942.4 318.68 L943.4 318.37 L944.4 318.06 L945.4 317.75 L946.4 317.43 L947.4 317.11 L948.4 316.80 L949.4 316.48 L950.4 316.16 L951.4 315.84 L952.4 315.52 L953.4 315.20 L954.4 314.88 L955.4 314.56 L956.4 314.23 L957.4 313.91 L958.4 313.59 L959.4 313.26 L960.4 312.94 L961.4 312.61 L962.4 312.29 L963.4 311.96 L964.4 311.64 L965.4 311.31 L966.4 310.98 L967.4 310.65 L968.4 310.32 L969.4 309.99 L970.4 309.66 L971.4 309.33 L972.4 309.00 L973.4 308.67 L974.4 308.34 L975.4 308.00 L976.4 307.67 L977.4 307.34 L978.4 307.00 L979.0 306.80" fill="none" stroke="#288f8b" stroke-width="1.5"/>
<line x1="752.2" y1="216" x2="752.2" y2="405.8" stroke="#c9d9db" stroke-width="1.3"/>
<line x1="746" y1="405.3" x2="752" y2="405.3" stroke="#c9d9db" stroke-width="1"/>
<text x="744.8" y="409.3" text-anchor="end" font-family="Liberation Sans" font-size="8.5" fill="#4a5458">$0</text>
<line x1="746" y1="358.0" x2="752" y2="358.0" stroke="#c9d9db" stroke-width="1"/>
<text x="744.8" y="362.0" text-anchor="end" font-family="Liberation Sans" font-size="8.5" fill="#4a5458">$2K</text>
<line x1="746" y1="310.70000000000005" x2="752" y2="310.70000000000005" stroke="#c9d9db" stroke-width="1"/>
<text x="744.8" y="314.70000000000005" text-anchor="end" font-family="Liberation Sans" font-size="8.5" fill="#4a5458">$4K</text>
<line x1="746" y1="263.40000000000003" x2="752" y2="263.40000000000003" stroke="#c9d9db" stroke-width="1"/>
<text x="744.8" y="267.40000000000003" text-anchor="end" font-family="Liberation Sans" font-size="8.5" fill="#4a5458">$6K</text>
<line x1="746" y1="216.10000000000002" x2="752" y2="216.10000000000002" stroke="#c9d9db" stroke-width="1"/>
<text x="744.8" y="220.10000000000002" text-anchor="end" font-family="Liberation Sans" font-size="8.5" fill="#4a5458">$8K</text>
<line x1="752.3" y1="405.3" x2="752.3" y2="410.3" stroke="#c9d9db" stroke-width="1"/>
<text x="755.8" y="416.8" text-anchor="end" transform="rotate(-45 755.8 416.8)" font-family="Liberation Sans" font-size="8.5" fill="#4a5458">Jan 26</text>
<line x1="784.6999999999999" y1="405.3" x2="784.6999999999999" y2="410.3" stroke="#c9d9db" stroke-width="1"/>
<text x="788.1999999999999" y="416.8" text-anchor="end" transform="rotate(-45 788.1999999999999 416.8)" font-family="Liberation Sans" font-size="8.5" fill="#4a5458">Jun 26</text>
<line x1="817.0999999999999" y1="405.3" x2="817.0999999999999" y2="410.3" stroke="#c9d9db" stroke-width="1"/>
<text x="820.5999999999999" y="416.8" text-anchor="end" transform="rotate(-45 820.5999999999999 416.8)" font-family="Liberation Sans" font-size="8.5" fill="#4a5458">Nov 26</text>
<line x1="849.5" y1="405.3" x2="849.5" y2="410.3" stroke="#c9d9db" stroke-width="1"/>
<text x="853.0" y="416.8" text-anchor="end" transform="rotate(-45 853.0 416.8)" font-family="Liberation Sans" font-size="8.5" fill="#4a5458">Apr 27</text>
<line x1="881.9" y1="405.3" x2="881.9" y2="410.3" stroke="#c9d9db" stroke-width="1"/>
<text x="885.4" y="416.8" text-anchor="end" transform="rotate(-45 885.4 416.8)" font-family="Liberation Sans" font-size="8.5" fill="#4a5458">Sep 27</text>
<line x1="914.3" y1="405.3" x2="914.3" y2="410.3" stroke="#c9d9db" stroke-width="1"/>
<text x="917.8" y="416.8" text-anchor="end" transform="rotate(-45 917.8 416.8)" font-family="Liberation Sans" font-size="8.5" fill="#4a5458">Feb 28</text>
<line x1="946.6999999999999" y1="405.3" x2="946.6999999999999" y2="410.3" stroke="#c9d9db" stroke-width="1"/>
<text x="950.1999999999999" y="416.8" text-anchor="end" transform="rotate(-45 950.1999999999999 416.8)" font-family="Liberation Sans" font-size="8.5" fill="#4a5458">Jul 28</text>
<line x1="979.0999999999999" y1="405.3" x2="979.0999999999999" y2="410.3" stroke="#c9d9db" stroke-width="1"/>
<text x="982.5999999999999" y="416.8" text-anchor="end" transform="rotate(-45 982.5999999999999 416.8)" font-family="Liberation Sans" font-size="8.5" fill="#4a5458">Dec 28</text>
<path d="M937.6 164.0 A4.6 4.6 0 1 1 935.6 168.6" fill="none" stroke="#1f2528" stroke-width="1.25"/>
<path d="M934.6 162.6 L935.3 166.6 L939.0 164.6 Z" fill="#1f2528" stroke="#1f2528" stroke-width="0.5" stroke-linejoin="round"/>
<path d="M972.8 162.1 H976.9 V166.2 M976.9 162.1 L972.6 166.4 M966.9 168.6 V172.7 H971 M966.9 172.7 L971.2 168.4" fill="none" stroke="#1f2528" stroke-width="1.3"/>
</svg>
<div class="t" style="left:718px;top:462.4px;font-size:8px;color:#3a4448">Range</div>
<div class="a" style="left:746.8px;top:455.6px;width:79.5px;height:19.4px;background:#fff;border:1px solid #e0e7e7;border-radius:3px"></div>
<div class="a" style="left:807px;top:456.6px;width:18.3px;height:17.4px;background:#e8f2f2"></div>
<div class="a" style="left:766.5px;top:456.6px;width:1px;height:17.4px;background:#e6ecec"></div>
<div class="a" style="left:787px;top:456.6px;width:1px;height:17.4px;background:#e6ecec"></div>
<div class="a" style="left:807px;top:456.6px;width:1px;height:17.4px;background:#e6ecec"></div>
<div class="t" style="left:741.6px;width:30px;text-align:center;top:462.2px;font-size:8px;color:#5a6468">1Y</div>
<div class="t" style="left:761.7px;width:30px;text-align:center;top:462.2px;font-size:8px;color:#5a6468">2Y</div>
<div class="t" style="left:782px;width:30px;text-align:center;top:462.2px;font-size:8px;color:#5a6468">3Y</div>
<div class="t" style="left:801.6px;width:30px;text-align:center;top:462.2px;font-size:8px;color:#1f262a">All</div>
<div class="t" style="left:902.8px;top:462.4px;font-size:8px;color:#3a4448">Period</div>
<div class="a" style="left:932.3px;top:455.3px;width:51.2px;height:19.3px;background:#fff;border:1px solid #e0e7e7;border-radius:3px"></div>
<div class="a" style="left:933.3px;top:456.3px;width:16.2px;height:17.3px;background:#e8f2f2"></div>
<div class="a" style="left:949.5px;top:456.3px;width:1px;height:17.3px;background:#e6ecec"></div>
<div class="a" style="left:966px;top:456.3px;width:1px;height:17.3px;background:#e6ecec"></div>
<div class="t" style="left:926px;width:30px;text-align:center;top:462.2px;font-size:8px;color:#1f262a">M</div>
<div class="t" style="left:942.7px;width:30px;text-align:center;top:462.2px;font-size:8px;color:#5a6468">Q</div>
<div class="t" style="left:959.7px;width:30px;text-align:center;top:462.2px;font-size:8px;color:#5a6468">A</div>

</body></html>
